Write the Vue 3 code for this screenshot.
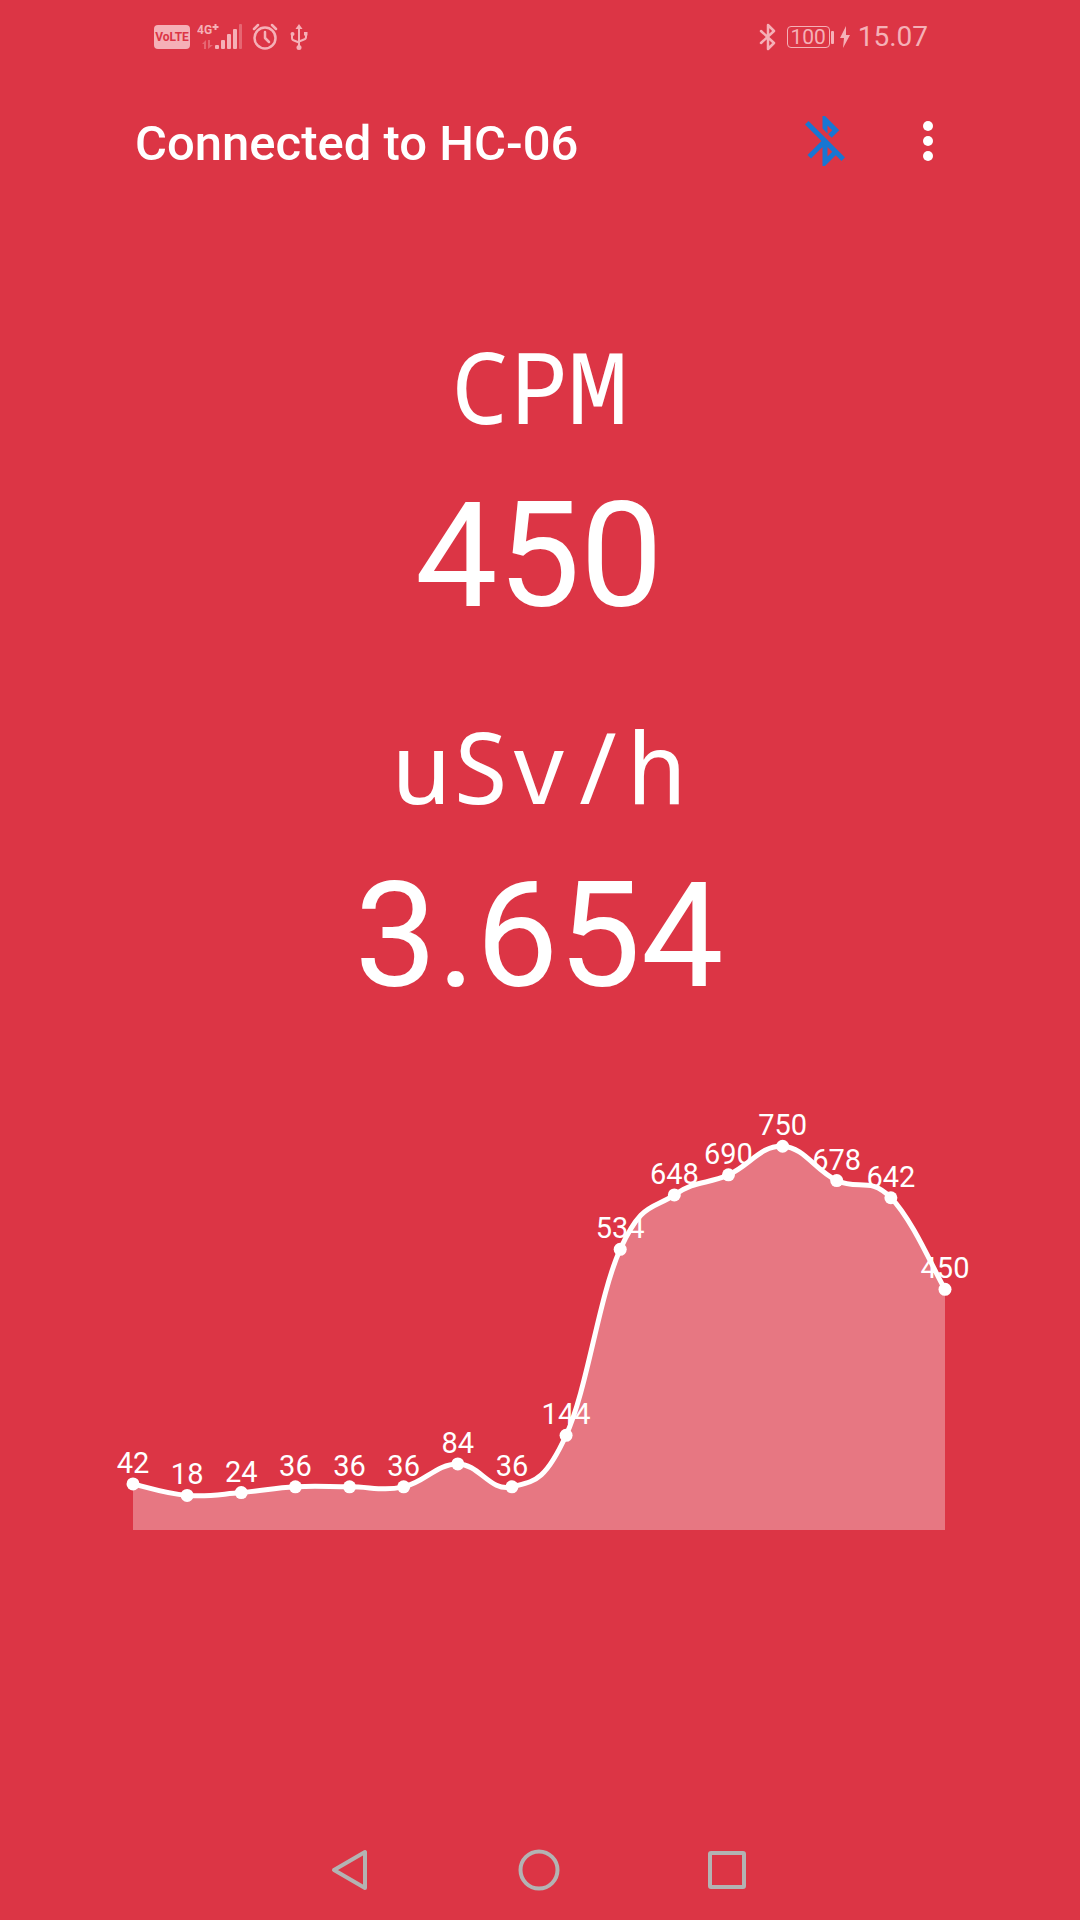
<script setup>
	import { ref, computed } from "vue";

	const deviceName = ref("HC-06");
	const clock = ref("15.07");
	const battery = ref(100);

	const readings = ref([
		{ unit: "CPM", value: "450" },
		{ unit: "uSv/h", value: "3.654" },
	]);

	const history = ref([
		42, 18, 24, 36, 36, 36, 84, 36, 144, 534, 648, 690, 750, 678, 642, 450,
	]);

	const chartWidth = 812;
	const chartHeight = 430;
	const intensity = 0.2;

	const points = computed(() => {
		const step = chartWidth / (history.value.length - 1);
		return history.value.map((value, i) => ({
			value,
			x: i * step,
			y: chartHeight - 26 - value * 0.477,
		}));
	});

	// cubic line: each handle follows the slope between the two neighbours
	const linePath = computed(() => {
		const p = points.value;
		let d = `M${p[0].x} ${p[0].y}`;
		for (let i = 1; i < p.length; i++) {
			const before = p[Math.max(i - 2, 0)];
			const prev = p[i - 1];
			const cur = p[i];
			const next = p[Math.min(i + 1, p.length - 1)];
			const x1 = prev.x + (cur.x - before.x) * intensity;
			const y1 = prev.y + (cur.y - before.y) * intensity;
			const x2 = cur.x - (next.x - prev.x) * intensity;
			const y2 = cur.y - (next.y - prev.y) * intensity;
			d += ` C${x1} ${y1} ${x2} ${y2} ${cur.x} ${cur.y}`;
		}
		return d;
	});

	const areaPath = computed(
		() => `${linePath.value} V${chartHeight} H0 Z`,
	);
</script>

<template>
	<div class="screen">
		<div class="status-bar">
			<div class="status-group">
				<span class="volte">VoLTE</span>
				<svg class="signal" width="48" height="28" viewBox="0 0 48 28">
					<text x="0" y="11" class="net">4G</text>
					<path d="M18.5 1v6M15.5 4h6" class="plus" />
					<g class="dim">
						<path d="M5 21l4-4v9H7v-5zM11 17h2v5h3l-5 4z" />
						<rect x="42" y="1" width="3" height="25" rx="1" />
					</g>
					<rect x="18" y="22" width="4" height="4" rx="1" />
					<rect x="24" y="17" width="4" height="9" rx="1" />
					<rect x="30" y="11" width="4" height="15" rx="1" />
					<rect x="36" y="6" width="4" height="20" rx="1" />
				</svg>
				<svg class="outline" width="26" height="28" viewBox="0 0 26 28">
					<circle cx="13" cy="15" r="10.5" />
					<path d="M13 9v6l4 4" />
					<path d="M2 6l4-4M24 6l-4-4" />
				</svg>
				<svg
					class="outline usb"
					width="18"
					height="28"
					viewBox="0 0 18 28"
				>
					<path d="M9 4v20M2 11v4q0 2 2 2.5l5 2M16 11v3q0 2-2 2.5l-5 2" />
					<path d="M9 1l3.5 5h-7z" class="solid" />
					<circle cx="9" cy="24.5" r="2.5" class="solid" />
					<circle cx="2.5" cy="11" r="2" class="solid" />
					<path d="M14 9h3.5v3.5H14z" class="solid" />
				</svg>
			</div>
			<div class="status-group right">
				<svg class="outline" width="18" height="28" viewBox="0 0 18 28">
					<path d="M2 8l13 12-6 6V2l6 6L2 20" />
				</svg>
				<span class="battery">{{ battery }}</span>
				<svg class="bolt" width="12" height="22" viewBox="0 0 12 22">
					<path d="M7 0L1 12h4L4 22l7-13H7z" />
				</svg>
				<time class="clock">{{ clock }}</time>
			</div>
		</div>

		<header class="toolbar">
			<h1>Connected to {{ deviceName }}</h1>
			<button class="bt-button" aria-label="Disconnect">
				<svg viewBox="0 0 24 24">
					<path
						d="M13 5.83l1.88 1.88-1.6 1.6 1.41 1.41 3.02-3.02L12 2h-1v5.03l2 2v-3.2zM5.41 4L4 5.41 10.59 12 5 17.59 6.41 19 11 14.41V22h1l4.29-4.29 2.3 2.29L20 18.59 5.41 4zM13 18.17v-3.76l1.88 1.88L13 18.17z"
					/>
				</svg>
			</button>
			<button class="more-button" aria-label="More options">
				<svg viewBox="0 0 10 40">
					<circle cx="5" cy="5" r="5" />
					<circle cx="5" cy="20" r="5" />
					<circle cx="5" cy="35" r="5" />
				</svg>
			</button>
		</header>

		<main>
			<section v-for="item in readings" :key="item.unit" class="reading">
				<h2>{{ item.unit }}</h2>
				<p>{{ item.value }}</p>
			</section>

			<svg class="chart" :viewBox="`0 0 ${chartWidth} ${chartHeight}`">
				<path :d="areaPath" class="area" />
				<path :d="linePath" class="line" />
				<g v-for="(point, i) in points" :key="i">
					<circle :cx="point.x" :cy="point.y" r="6.5" />
					<text :x="point.x" :y="point.y - 11">{{ point.value }}</text>
				</g>
			</svg>
		</main>

		<nav class="nav-bar">
			<button aria-label="Back">
				<svg viewBox="0 0 48 48">
					<path d="M38 6v36L7 24z" />
				</svg>
			</button>
			<button aria-label="Home">
				<svg viewBox="0 0 48 48">
					<circle cx="24" cy="24" r="18.5" />
				</svg>
			</button>
			<button aria-label="Recent apps">
				<svg viewBox="0 0 48 48">
					<rect x="7" y="7" width="34" height="34" rx="1" />
				</svg>
			</button>
		</nav>
	</div>
</template>

<style>
	body {
		margin: 0;
		background: #dc3545;
	}
</style>

<style scoped>
	.screen {
		box-sizing: border-box;
		min-height: 100vh;
		padding: 0 135px 0 133px;
		display: flex;
		flex-direction: column;
		background: #dc3545;
		color: #fff;
		font-family: Roboto, sans-serif;
	}

	button {
		padding: 0;
		border: none;
		background: none;
		cursor: pointer;
	}
	button svg {
		display: block;
	}

	.status-bar {
		height: 74px;
		padding: 0 17px 0 21px;
		display: flex;
		justify-content: space-between;
		align-items: center;
		color: #f5b0b7;
	}
	.status-group {
		display: flex;
		align-items: center;
		gap: 7px;
	}
	.status-group svg {
		fill: currentColor;
	}
	.status-group .outline {
		fill: none;
		stroke: currentColor;
		stroke-width: 2.5;
		stroke-linecap: round;
		stroke-linejoin: round;
	}
	.status-group .usb {
		margin-left: 5px;
		stroke-width: 2;
	}
	.status-group .solid {
		fill: currentColor;
		stroke: none;
	}
	.volte {
		width: 36px;
		border-radius: 4px;
		background: #f5b0b7;
		color: #dc3545;
		font-size: 12px;
		font-weight: 700;
		line-height: 24px;
		text-align: center;
	}
	.net {
		font-size: 12px;
		font-weight: 700;
	}
	.plus {
		stroke: currentColor;
		stroke-width: 2;
	}
	.dim {
		opacity: 0.4;
	}
	.battery {
		position: relative;
		box-sizing: border-box;
		width: 43px;
		border: 1px solid #f5b0b7;
		border-radius: 4px;
		font-size: 21px;
		line-height: 20px;
		text-align: center;
		margin: 0 2px 0 3px;
	}
	.battery::after {
		content: "";
		position: absolute;
		left: 43px;
		top: 4px;
		width: 3px;
		height: 13px;
		border-radius: 1px;
		background: #f5b0b7;
	}
	.clock {
		font-size: 28px;
		line-height: 32px;
	}

	.toolbar {
		height: 134px;
		display: flex;
		align-items: center;
	}
	.toolbar h1 {
		flex: 1;
		margin: 0;
		padding: 6px 0 0 2px;
		font-size: 49px;
		font-weight: 500;
		line-height: 60px;
	}
	.bt-button {
		width: 60px;
		margin-right: 56px;
		fill: #1976d2;
	}
	.more-button {
		width: 34px;
		fill: #fff;
	}
	.more-button svg {
		width: 10px;
		margin: 0 auto;
	}

	main {
		flex: 1;
		padding-top: 118px;
	}
	.reading {
		margin-bottom: 64px;
		text-align: center;
	}
	.reading h2 {
		margin: 0 0 24px;
		font-family: "Noto Sans Mono", "DejaVu Sans Mono", monospace;
		font-size: 98px;
		font-weight: 400;
		line-height: 120px;
	}
	.reading p {
		margin: 0;
		font-size: 147px;
		line-height: 172px;
	}

	.chart {
		display: block;
		width: 100%;
		margin-top: 78px;
		overflow: visible;
		fill: #fff;
	}
	.chart .area {
		fill: rgba(255, 255, 255, 0.33);
	}
	.chart .line {
		fill: none;
		stroke: #fff;
		stroke-width: 5;
	}
	.chart text {
		font-size: 29px;
		text-anchor: middle;
	}

	.nav-bar {
		height: 100px;
		display: flex;
		justify-content: center;
		align-items: center;
		gap: 140px;
	}
	.nav-bar button {
		width: 48px;
	}
	.nav-bar svg {
		fill: none;
		stroke: #b3b3b3;
		stroke-width: 4;
		stroke-linejoin: round;
	}
</style>
